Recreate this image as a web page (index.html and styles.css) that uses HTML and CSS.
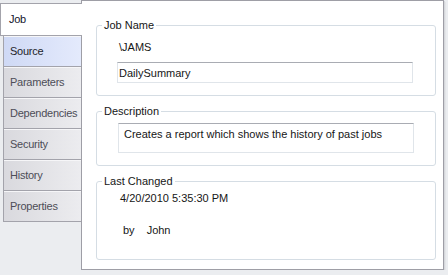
FILE: index.html
```html
<!DOCTYPE html>
<html lang="en">
<head>
    <meta charset="UTF-8">
    <title>Job Properties</title>
    <link rel="stylesheet" href="styles.css">
</head>
<body>
    <div class="tabs">
        <div class="tab selected">Job</div>
        <div class="tab hover">Source</div>
        <div class="tab">Parameters</div>
        <div class="tab">Dependencies</div>
        <div class="tab">Security</div>
        <div class="tab">History</div>
        <div class="tab">Properties</div>
    </div>

    <div class="panel">
        <fieldset class="group job-name">
            <legend>Job Name</legend>
            <div class="path">\JAMS</div>
            <input type="text" class="field" value="DailySummary" readonly>
        </fieldset>

        <fieldset class="group description">
            <legend>Description</legend>
            <textarea class="field multiline" readonly>Creates a report which shows the history of past jobs</textarea>
        </fieldset>

        <fieldset class="group last-changed">
            <legend>Last Changed</legend>
            <div class="changed-on">4/20/2010 5:35:30 PM</div>
            <div class="changed-by">
                <span class="by">by</span>
                <span>John</span>
            </div>
        </fieldset>
    </div>
</body>
</html>
```

FILE: styles.css
```css
body {
    margin: 0;
    background-color: #ebedf0;
    font-family: "Liberation Sans", Arial, sans-serif;
    font-size: 11px;
    line-height: 13px;
    color: #161616;
    display: flex;
    align-items: flex-start;
}

.tabs {
    width: 81px;
    padding-top: 3px;
    display: flex;
    flex-direction: column;
    flex-shrink: 0;
}

.tab {
    margin-left: 3px;
    height: 30px;
    padding-left: 6px;
    display: flex;
    align-items: center;
    letter-spacing: -0.25px;
    color: #4d4d57;
    border-left: 1px solid #a3a3ab;
    border-bottom: 1px solid #a3a3ab;
    box-shadow: inset 0 1px 0 #f6f6f8;
    background: linear-gradient(to right, #d9d9de, #ececef);
}

.tab.hover {
    color: #1e1e2a;
    background: linear-gradient(to right, #cfd9f5, #e4eafc);
}

.tab.selected {
    position: relative;
    z-index: 1;
    margin-left: 0;
    margin-right: -1px;
    height: 31px;
    padding-left: 8px;
    color: #14142a;
    background: #ffffff;
    border-top: 1px solid #a3a3ab;
    box-shadow: none;
}

.panel {
    box-sizing: border-box;
    width: 363px;
    height: 270px;
    padding: 18px 7px 0 14px;
    background-color: #ffffff;
    border: 1px solid #9e9ea6;
    box-shadow: 1px 1px 0 #d6d8dc, 2px 2px 0 #e3e5e8;
}

.group {
    margin: 0 0 9px 0;
    padding: 0;
    border: 1px solid #d5dde4;
    border-radius: 3px;
}

.group legend {
    margin-left: 5px;
    padding: 0 2px;
    line-height: 13px;
}

.path {
    margin: 9px 0 8px 22px;
}

.field {
    display: block;
    box-sizing: border-box;
    margin: 0 0 12px 20px;
    width: 296px;
    height: 21px;
    padding: 0 1px;
    font: inherit;
    color: #161616;
    background: #ffffff;
    border: 1px solid #e0e5ea;
    border-top-color: #a9acb3;
    outline: none;
}

.field.multiline {
    margin: 5px 0 12px 21px;
    height: 30px;
    padding: 4px 5px;
    resize: none;
    overflow: hidden;
}

.changed-on {
    margin: 4px 0 0 23px;
}

.changed-by {
    display: flex;
    gap: 12px;
    margin: 19px 0 22px 26px;
}
```
